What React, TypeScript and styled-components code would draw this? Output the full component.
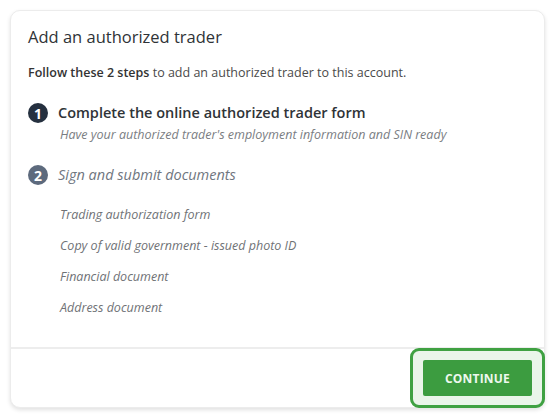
import React from "react";
import styled, { createGlobalStyle } from "styled-components";

const GlobalStyle = createGlobalStyle`
  body {
    margin: 0;
    background: #ffffff;
    font-family: "Open Sans", "Noto Sans", sans-serif;
  }
`;

const Page = styled.div`
  padding: 10px;
  width: 555px;
  height: 418px;
  box-sizing: border-box;
`;

const Card = styled.div`
  width: 535px;
  height: 398px;
  box-sizing: border-box;
  background: #ffffff;
  border: 1px solid #ececec;
  border-radius: 10px;
  box-shadow: 0 2px 4px rgba(0, 0, 0, 0.12);
  display: flex;
  flex-direction: column;
`;

const Body = styled.div`
  flex: 1;
  padding: 14px 17px 0 17px;
  border-bottom: 2px solid #ededed;
`;

const Title = styled.h2`
  margin: 0;
  font-size: 16.5px;
  font-weight: 400;
  color: #2f3337;
  line-height: 24px;
`;

const Intro = styled.p`
  margin: 15px 0 0 0;
  font-size: 12.5px;
  line-height: 18px;
  color: #4a4a4a;
  b {
    font-weight: 600;
    color: #333;
  }
`;

const Step = styled.div`
  display: flex;
  align-items: center;
  gap: 10px;
  height: 24px;
  margin-top: 19px;
`;

const Num = styled.span<{ $active?: boolean }>`
  width: 20px;
  height: 20px;
  border-radius: 50%;
  background: ${(p) => (p.$active ? "#25303f" : "#5d6a7d")};
  color: #fff;
  font-size: 14px;
  font-weight: 700;
  display: flex;
  align-items: center;
  justify-content: center;
  flex-shrink: 0;
`;

const StepTitle = styled.span<{ $active?: boolean }>`
  font-size: 14.5px;
  line-height: 24px;
  font-weight: ${(p) => (p.$active ? 600 : 400)};
  font-style: ${(p) => (p.$active ? "normal" : "italic")};
  color: ${(p) => (p.$active ? "#2f3337" : "#6f7680")};
`;

const Note = styled.div`
  margin: 1px 0 0 32px;
  font-size: 12.5px;
  line-height: 18px;
  font-style: italic;
  color: #7a7d82;
`;

const DocList = styled.ul`
  list-style: none;
  margin: 19px 0 0 32px;
  padding: 0;
  display: flex;
  flex-direction: column;
  gap: 13px;
`;

const Doc = styled.li`
  font-size: 12.5px;
  line-height: 18px;
  font-style: italic;
  color: #6f7276;
`;

const Footer = styled.div`
  height: 58px;
  display: flex;
  justify-content: flex-end;
  align-items: flex-end;
`;

const Highlight = styled.div`
  width: 135px;
  height: 60px;
  box-sizing: border-box;
  margin: -2px -1px -1px 0;
  border: 3px solid #3fa142;
  border-radius: 9px;
  background: #eaf5ea;
  display: flex;
  align-items: center;
  justify-content: center;
`;

const ContinueButton = styled.button`
  width: 109px;
  height: 36px;
  border: none;
  border-radius: 2px;
  background: #3c9c40;
  color: #eef8ee;
  font-family: "Open Sans", "Noto Sans", sans-serif;
  font-size: 12px;
  font-weight: 700;
  letter-spacing: 0.2px;
  cursor: pointer;
`;

const documents = [
  "Trading authorization form",
  "Copy of valid government - issued photo ID",
  "Financial document",
  "Address document",
];

export default function App() {
  return (
    <Page>
      <GlobalStyle />
      <Card>
        <Body>
          <Title>Add an authorized trader</Title>
          <Intro>
            <b>Follow these 2 steps</b> to add an authorized trader to this account.
          </Intro>
          <Step>
            <Num $active>1</Num>
            <StepTitle $active>Complete the online authorized trader form</StepTitle>
          </Step>
          <Note>Have your authorized trader's employment information and SIN ready</Note>
          <Step>
            <Num>2</Num>
            <StepTitle>Sign and submit documents</StepTitle>
          </Step>
          <DocList>
            {documents.map((d) => (
              <Doc key={d}>{d}</Doc>
            ))}
          </DocList>
        </Body>
        <Footer>
          <Highlight>
            <ContinueButton>CONTINUE</ContinueButton>
          </Highlight>
        </Footer>
      </Card>
    </Page>
  );
}
